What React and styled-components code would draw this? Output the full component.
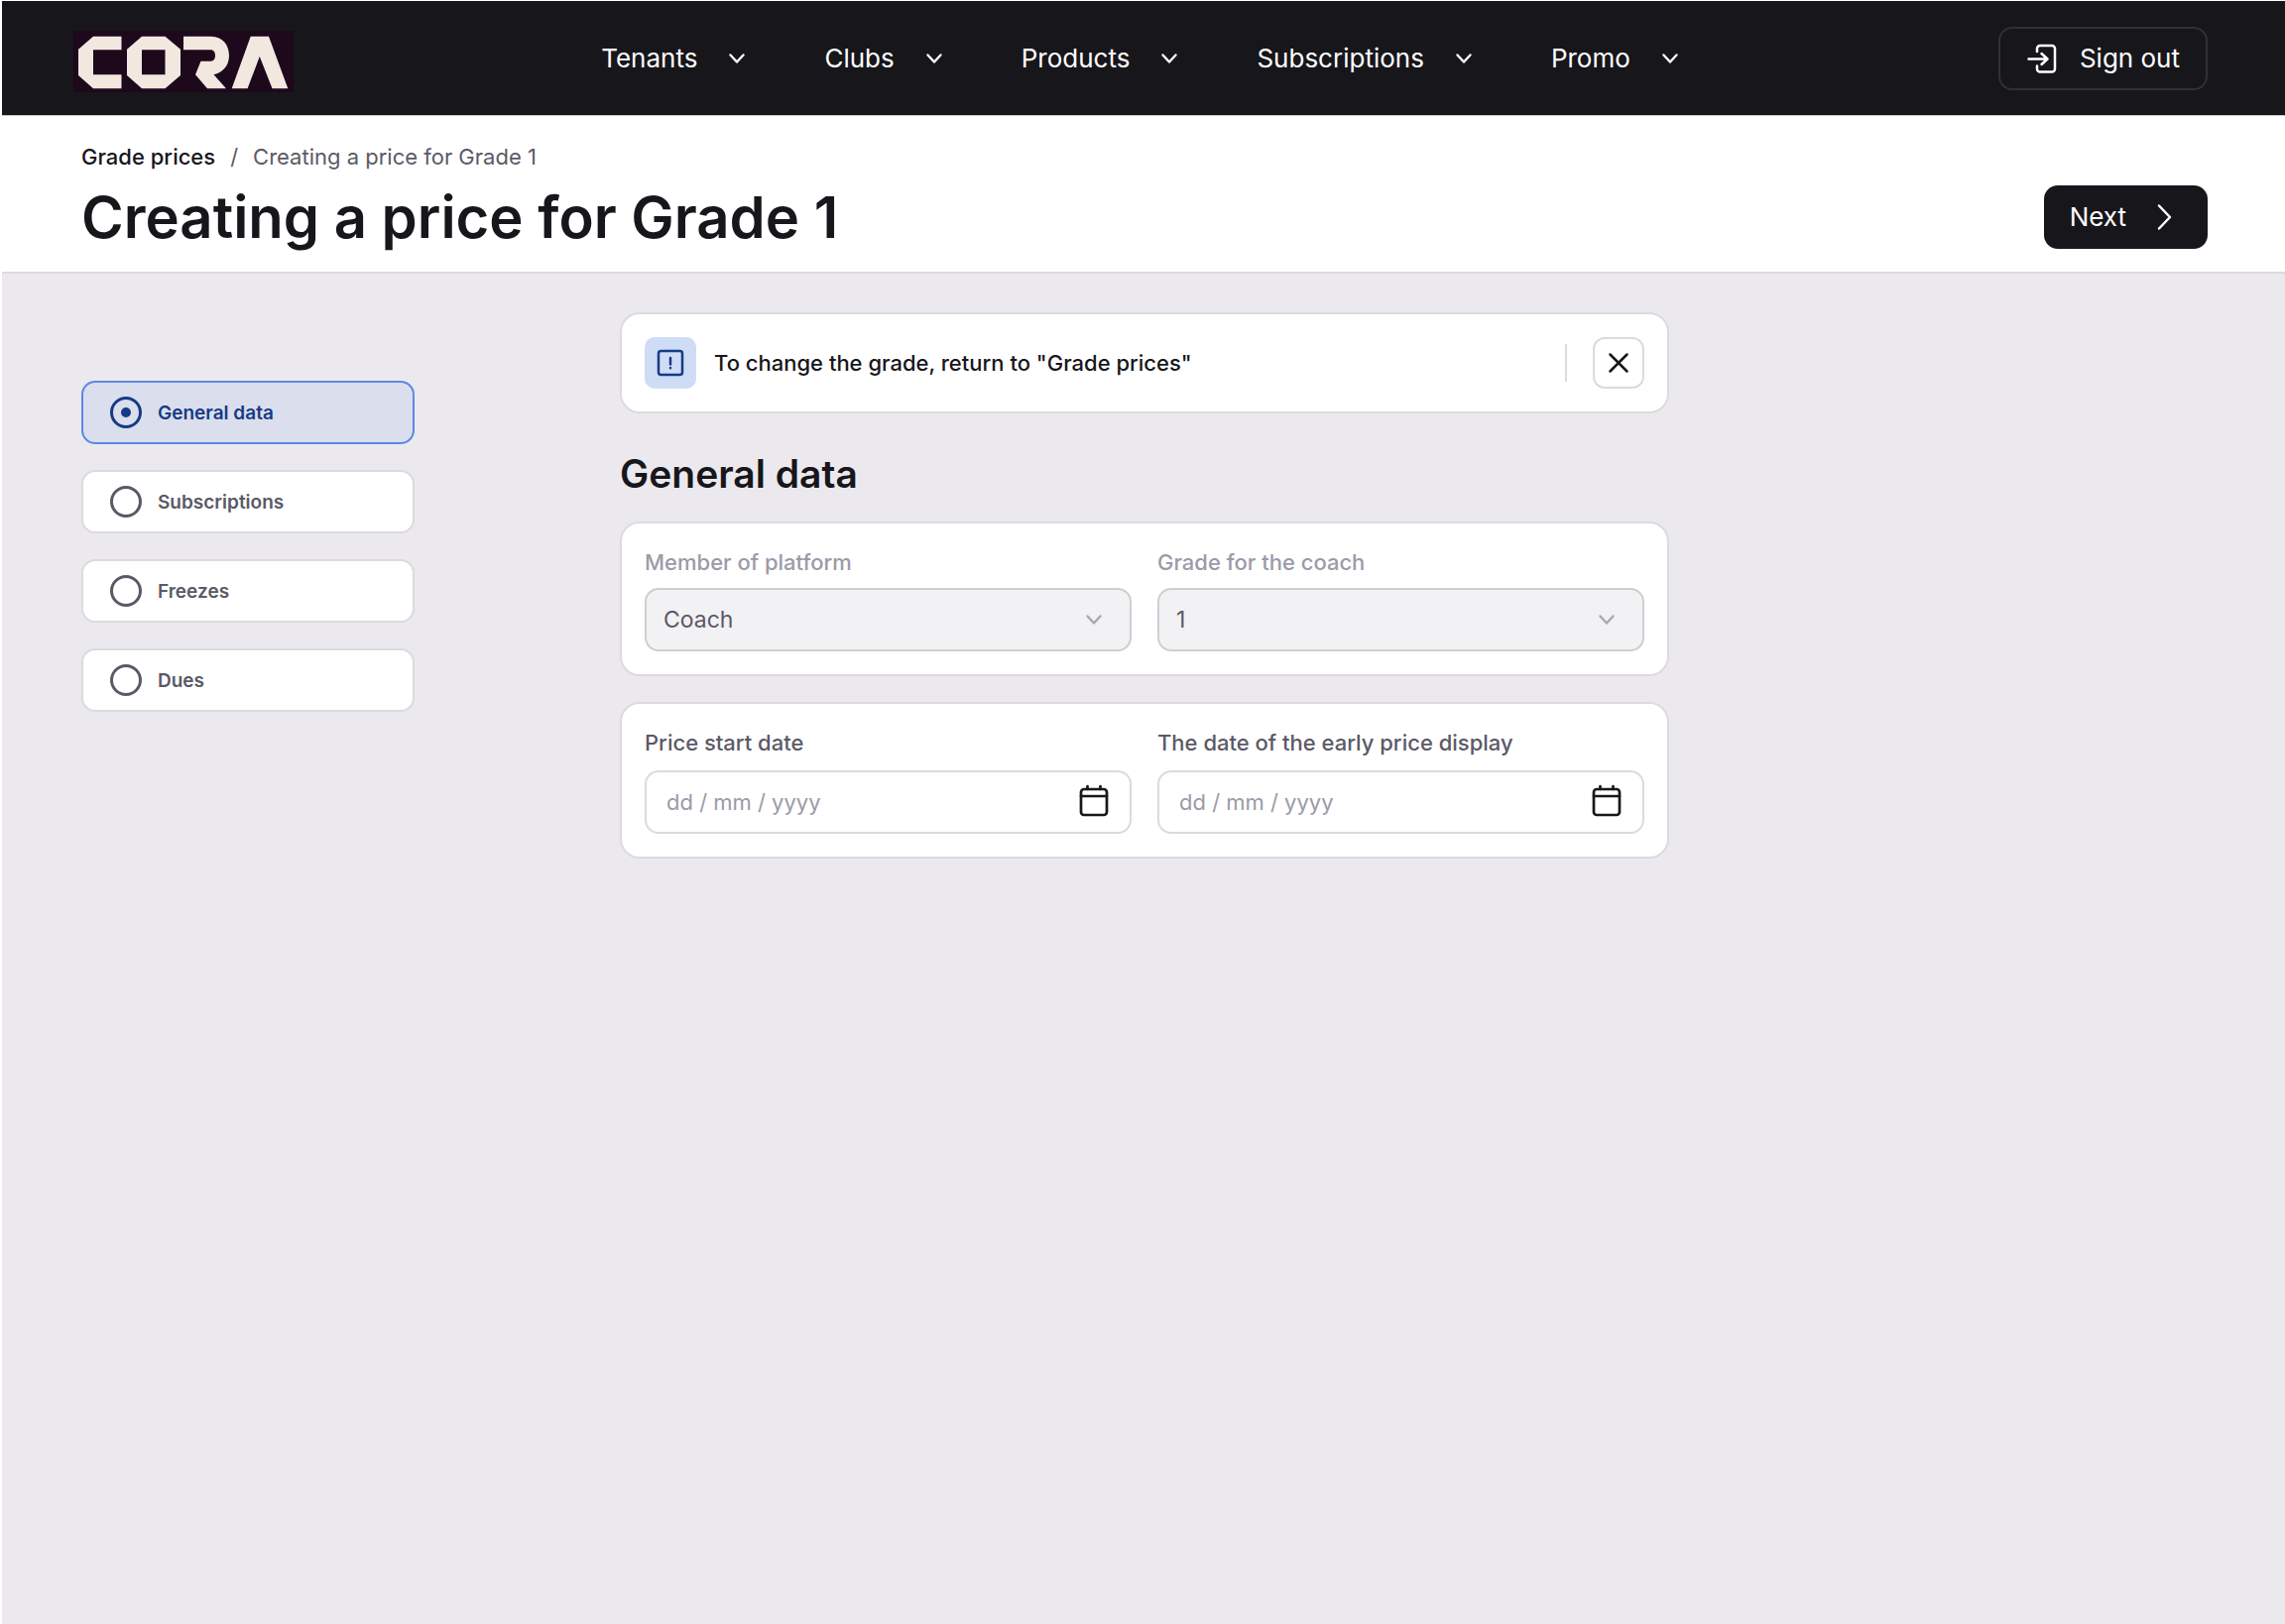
import React, { useState } from "react";
import styled, { createGlobalStyle } from "styled-components";

const color = {
  ink: "#17161b",
  muted: "#5b5966",
  faint: "#9c9aa8",
  line: "#dbdbde",
  page: "#ebe9ee",
  navy: "#163b84",
};

const GlobalStyle = createGlobalStyle`
  *, *::before, *::after { box-sizing: border-box; }
  body {
    margin: 0;
    background: ${color.page};
    color: ${color.ink};
    font-family: Inter, "Liberation Sans", sans-serif;
  }
  button, input, select { font: inherit; color: inherit; margin: 0; }
  h1, h2, p, ol, ul { margin: 0; padding: 0; }
`;

const Page = styled.div`
  min-height: 100vh;
  border-left: 2px solid #fff;
  border-top: 1px solid #fff;
`;

const TopBar = styled.header`
  display: grid;
  grid-template-columns: 1fr auto 1fr;
  align-items: center;
  height: 116px;
  padding: 0 78px;
  background: ${color.ink};
  border-bottom: 1px solid #c9c9cc;
`;

const Brand = styled.a`
  display: flex;
  justify-self: start;
  margin-left: -6px;
  padding-top: 6px;
`;

const Nav = styled.nav`
  display: flex;
  gap: 72px;
`;

const NavItem = styled.button`
  display: flex;
  align-items: center;
  gap: 24px;
  padding: 0;
  border: 0;
  background: none;
  color: #fff;
  font-size: 26px;
  line-height: 32px;
  cursor: pointer;
`;

const Action = styled.button`
  display: flex;
  align-items: center;
  gap: ${(p) => (p.$outlined ? 22 : 24)}px;
  justify-self: end;
  height: 64px;
  padding: 0 26px;
  border: ${(p) => (p.$outlined ? "2px solid #303035" : "0")};
  border-radius: 14px;
  background: ${color.ink};
  color: #fff;
  font-size: 26px;
  line-height: 32px;
  cursor: pointer;
`;

const PageHead = styled.section`
  display: flex;
  flex-direction: column;
  gap: 15px;
  padding: 27px 78px 23px 80px;
  background: #fff;
  border-bottom: 2px solid ${color.line};
`;

const Crumbs = styled.ol`
  display: flex;
  gap: 15px;
  list-style: none;
  color: ${color.muted};
  font-size: 22px;
  line-height: 28px;

  a {
    color: ${color.ink};
    font-weight: 500;
    text-decoration: none;
  }
`;

const TitleRow = styled.div`
  display: flex;
  align-items: center;
  justify-content: space-between;
`;

const Title = styled.h1`
  font-size: 58px;
  line-height: 64px;
  font-weight: 600;
`;

const Body = styled.div`
  display: grid;
  grid-template-columns: 1fr minmax(0, 1058px) 1fr;
  padding: 39px 78px 39px 80px;
`;

const Steps = styled.div`
  display: flex;
  flex-direction: column;
  gap: 26px;
  width: 336px;
  padding-top: 69px;
`;

const Step = styled.label`
  display: flex;
  align-items: center;
  gap: 16px;
  height: 64px;
  padding: 0 27px;
  border: 2px solid ${(p) => (p.$active ? "#5a8ae2" : color.line)};
  border-radius: 14px;
  background: ${(p) => (p.$active ? "#dbdeed" : "#fff")};
  color: ${(p) => (p.$active ? color.navy : color.muted)};
  font-size: 19px;
  font-weight: 600;
  cursor: pointer;
`;

const Radio = styled.input`
  display: grid;
  place-items: center;
  width: 32px;
  height: 32px;
  appearance: none;
  border: 3px solid currentColor;
  border-radius: 50%;

  &:checked::before {
    content: "";
    width: 10px;
    height: 10px;
    border-radius: 50%;
    background: currentColor;
  }
`;

const Content = styled.main`
  display: flex;
  flex-direction: column;
`;

const Panel = styled.section`
  padding: 23px;
  border: 2px solid ${color.line};
  border-radius: 20px;
  background: #fff;
`;

const Notice = styled(Panel)`
  display: flex;
  align-items: center;
`;

const NoticeBadge = styled.span`
  display: grid;
  place-items: center;
  width: 52px;
  height: 52px;
  margin-right: 18px;
  border-radius: 10px;
  background: #cfdcf5;
  color: ${color.navy};
`;

const NoticeText = styled.p`
  flex: 1;
  font-size: 22px;
  line-height: 32px;
  font-weight: 500;
`;

const Divider = styled.span`
  width: 2px;
  height: 38px;
  margin-right: 26px;
  background: ${color.line};
`;

const CloseButton = styled.button`
  display: grid;
  place-items: center;
  width: 52px;
  height: 52px;
  padding: 0;
  border: 2px solid ${color.line};
  border-radius: 12px;
  background: #fff;
  cursor: pointer;
`;

const SectionTitle = styled.h2`
  margin: 37px 0 24px;
  font-size: 39px;
  line-height: 48px;
  font-weight: 600;
`;

const PanelStack = styled.div`
  display: flex;
  flex-direction: column;
  gap: 26px;
`;

const FieldPanel = styled(Panel)`
  display: grid;
  grid-template-columns: 1fr 1fr;
  gap: 26px;
`;

const Field = styled.div`
  display: flex;
  flex-direction: column;
  gap: ${(p) => (p.$disabled ? 10 : 12)}px;
`;

const Label = styled.label`
  color: ${(p) => (p.$disabled ? color.faint : color.muted)};
  font-size: 22px;
  line-height: 32px;
  font-weight: 500;
`;

const Control = styled.div`
  position: relative;
`;

const Select = styled.select`
  display: block;
  width: 100%;
  height: 64px;
  padding: 0 64px 0 17px;
  appearance: none;
  border: 2px solid #cfcfd2;
  border-radius: 14px;
  background: #f2f1f4;
  color: ${color.muted};
  font-size: 23px;
  opacity: 1;
`;

const DateInput = styled.input`
  display: block;
  width: 100%;
  height: 64px;
  padding: 0 64px 0 20px;
  border: 2px solid ${color.line};
  border-radius: 14px;
  background: #fff;
  font-size: 22px;

  &::placeholder {
    color: ${color.faint};
    opacity: 1;
  }
`;

const SelectArrow = styled.span`
  position: absolute;
  top: 16px;
  right: 22px;
  display: flex;
  color: #a9a8b0;
  pointer-events: none;
`;

const CalendarButton = styled.button`
  position: absolute;
  top: 14px;
  right: 21px;
  display: flex;
  padding: 0;
  border: 0;
  background: none;
  cursor: pointer;
`;

function Icon({ size = 32, stroke = 2.5, children }) {
  return (
    <svg
      width={size}
      height={size}
      viewBox={`0 0 ${size} ${size}`}
      fill="none"
      stroke="currentColor"
      strokeWidth={stroke}
      strokeLinecap="round"
      strokeLinejoin="round"
      aria-hidden="true"
    >
      {children}
    </svg>
  );
}

const ChevronDown = () => (
  <Icon stroke={2.4}>
    <path d="M9.5 12.5 16 19.5l6.5-7" />
  </Icon>
);

const ChevronRight = () => (
  <Icon>
    <path d="M9 4.5 20 16 9 27.500" />
  </Icon>
);

const SignOutIcon = () => (
  <Icon>
    <path d="M11 9V6a3 3 0 0 1 3-3h12a3 3 0 0 1 3 3v20.500a3 3 0 0 1-3 3H14a3 3 0 0 1-3-3V23.500" />
    <path d="M2.500 16.500H21.500M15.500 11l6 5.500-6 5.500" />
  </Icon>
);

const AlertIcon = () => (
  <Icon size={28}>
    <rect x="2" y="2" width="24" height="24" rx="2.500" />
    <path d="M14 9v6.500M14 19v.3" />
  </Icon>
);

const CloseIcon = () => (
  <Icon size={24}>
    <path d="m3.500 3.500 17 17M20.500 3.500l-17 17" />
  </Icon>
);

const CalendarIcon = () => (
  <Icon size={34} stroke={2.7}>
    <rect x="4" y="5" width="26" height="26" rx="3" />
    <path d="M4 12h26M10.500 2v3M23.500 2v3" />
  </Icon>
);

const Logo = () => (
  <svg width="222" height="62" viewBox="0 0 222 62" role="img" aria-label="Cora">
    <rect width="222" height="62" fill="#1e081c" />
    <g fill="#f2e8df">
      <path d="M20 5.700H48.500V19.300H20V44.300H48.500V58.300H20L5 45V18.700Z" />
      <path
        fillRule="evenodd"
        d="M69 5.700H92.500L108 18.700V45L92.500 58.300H69L54 45V18.700ZM69 19.300V44.300H92.500V19.300Z"
      />
      <path d="M111 5.700H139C150 5.700 157 14 157 25C157 35 151 42 141.500 44.300L154 58.300H135L123 44.300L128.500 30.700H138.500C141.500 30.700 143 28 143 25C143 22 141.500 19.300 138.500 19.300H111Z" />
      <path d="M178.700 5.700H197L216.300 58.300H200.500L187.800 26L175.600 58.300H159.700Z" />
    </g>
  </svg>
);

const NAV = ["Tenants", "Clubs", "Products", "Subscriptions", "Promo"];
const STEPS = ["General data", "Subscriptions", "Freezes", "Dues"];

function SelectField({ id, label, value }) {
  return (
    <Field $disabled>
      <Label htmlFor={id} $disabled>
        {label}
      </Label>
      <Control>
        <Select id={id} disabled defaultValue={value}>
          <option>{value}</option>
        </Select>
        <SelectArrow>
          <ChevronDown />
        </SelectArrow>
      </Control>
    </Field>
  );
}

function DateField({ id, label }) {
  return (
    <Field>
      <Label htmlFor={id}>{label}</Label>
      <Control>
        <DateInput id={id} type="text" placeholder="dd / mm / yyyy" />
        <CalendarButton type="button" aria-label={`Open calendar: ${label}`}>
          <CalendarIcon />
        </CalendarButton>
      </Control>
    </Field>
  );
}

export default function App() {
  const [step, setStep] = useState(STEPS[0]);
  const [noticeOpen, setNoticeOpen] = useState(true);

  return (
    <>
      <GlobalStyle />
      <Page>
        <TopBar>
          <Brand href="#">
            <Logo />
          </Brand>
          <Nav>
            {NAV.map((item) => (
              <NavItem key={item} type="button">
                {item}
                <ChevronDown />
              </NavItem>
            ))}
          </Nav>
          <Action type="button" $outlined>
            <SignOutIcon />
            Sign out
          </Action>
        </TopBar>

        <PageHead>
          <Crumbs>
            <li>
              <a href="#">Grade prices</a>
            </li>
            <li aria-hidden="true">/</li>
            <li>Creating a price for Grade 1</li>
          </Crumbs>
          <TitleRow>
            <Title>Creating a price for Grade 1</Title>
            <Action type="button">
              Next
              <ChevronRight />
            </Action>
          </TitleRow>
        </PageHead>

        <Body>
          <Steps role="radiogroup" aria-label="Steps">
            {STEPS.map((name) => (
              <Step key={name} $active={name === step}>
                <Radio
                  type="radio"
                  name="step"
                  checked={name === step}
                  onChange={() => setStep(name)}
                />
                {name}
              </Step>
            ))}
          </Steps>

          <Content>
            {noticeOpen && (
              <Notice>
                <NoticeBadge>
                  <AlertIcon />
                </NoticeBadge>
                <NoticeText>To change the grade, return to "Grade prices"</NoticeText>
                <Divider />
                <CloseButton
                  type="button"
                  aria-label="Close"
                  onClick={() => setNoticeOpen(false)}
                >
                  <CloseIcon />
                </CloseButton>
              </Notice>
            )}
            <SectionTitle>General data</SectionTitle>
            <PanelStack>
              <FieldPanel>
                <SelectField id="member" label="Member of platform" value="Coach" />
                <SelectField id="grade" label="Grade for the coach" value="1" />
              </FieldPanel>
              <FieldPanel>
                <DateField id="start" label="Price start date" />
                <DateField id="early" label="The date of the early price display" />
              </FieldPanel>
            </PanelStack>
          </Content>
        </Body>
      </Page>
    </>
  );
}
